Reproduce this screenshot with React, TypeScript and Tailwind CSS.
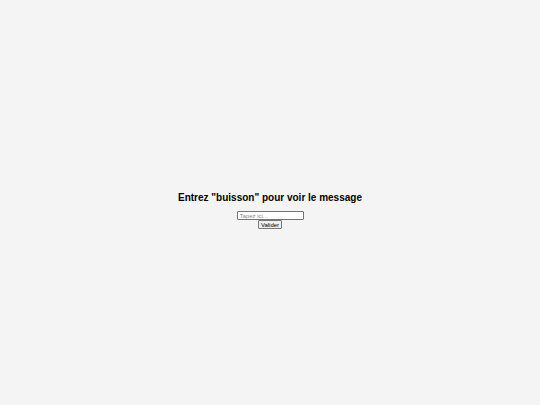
import React, { useState } from 'react';

export default function App() {
    const [value, setValue] = useState('');

    return (
        <div className="w-full h-screen bg-[#f4f4f4] flex flex-col items-center pt-[192px] font-['Liberation_Sans',Arial,sans-serif]">
            <h1 className="text-[10px] leading-[12px] font-bold text-black">
                Entrez "buisson" pour voir le message
            </h1>
            <input
                type="text"
                value={value}
                onChange={e => setValue(e.target.value)}
                placeholder="Tapez ici..."
                className="mt-[7px] w-[67px] h-[9px] px-[2px] bg-white border border-[#767676] rounded-[1px] text-[6px] leading-none placeholder:text-[#8a8a8a] outline-none"
            />
            <button className="w-[24px] h-[9px] bg-[#efefef] border border-[#767676] rounded-[1px] text-[6px] leading-none text-black">
                Valider
            </button>
        </div>
    );
}
